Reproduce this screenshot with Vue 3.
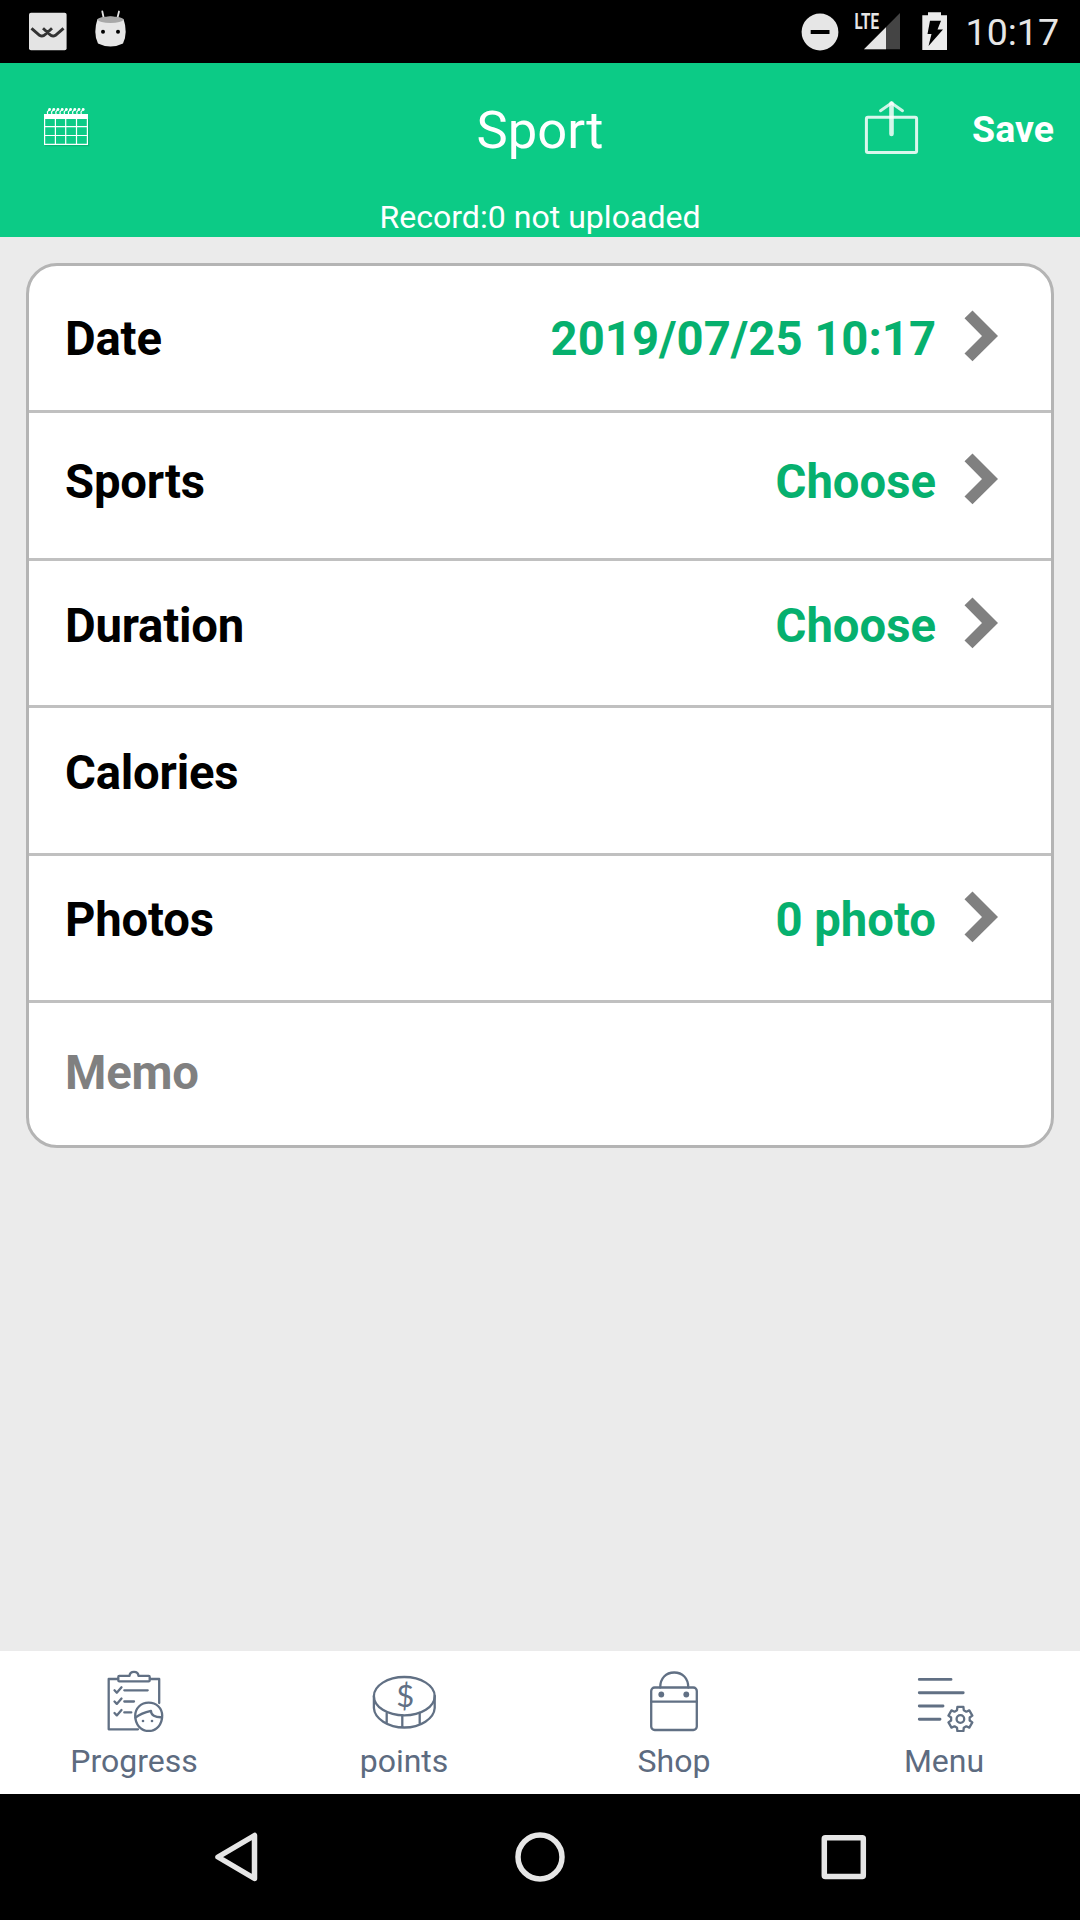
<script setup>
const rows = [
  { key: 'date', label: 'Date', value: '2019/07/25 10:17' },
  { key: 'sports', label: 'Sports', value: 'Choose' },
  { key: 'duration', label: 'Duration', value: 'Choose' },
  { key: 'calories', label: 'Calories', value: '' },
  { key: 'photos', label: 'Photos', value: '0 photo' },
  { key: 'memo', label: 'Memo', value: '' },
]

// six-toothed gear outline around (cx, cy)
function gear(cx, cy, outer, root) {
  const pts = []
  for (let i = 0; i < 6; i++) {
    const a = -90 + i * 60
    for (const [d, r] of [[-21, root], [-14, outer], [14, outer], [21, root]]) {
      const t = ((a + d) * Math.PI) / 180
      pts.push(`${(cx + r * Math.cos(t)).toFixed(2)} ${(cy + r * Math.sin(t)).toFixed(2)}`)
    }
  }
  return `M${pts.join('L')}Z`
}
const gearPath = gear(960.4, 1719, 12.4, 9.4)
const rings = Array.from({ length: 9 }, (_, i) => 49.6 + i * 4.2)
</script>

<template>
  <div class="screen">
    <div class="status">
      <svg class="st-left" width="140" height="63" viewBox="0 0 140 63">
        <rect x="29" y="12.7" width="37.6" height="37.6" rx="2" fill="#e4e4e4" />
        <path d="M31.500 28.300L39.500 35.300Q42.500 37.300 45.500 34.300L52 28.300M43 28.300L49.500 34.300Q52.500 37.300 55.500 35.300L63.500 28.300" fill="none" stroke="#333" stroke-width="2.900" />
        <path d="M102.300 11.500L103.800 18.500M119 11.500L117.300 18.500" stroke="#e4e4e4" stroke-width="1.800" stroke-linecap="round" />
        <path d="M97.500 19Q110.500 14 123.500 19Q125.700 25 125.700 32Q125.500 39 123 43.500Q117 46.500 110.500 46.500Q104 46.500 98 43.500Q95.500 39 95.300 32Q95.300 25 97.500 19Z" fill="#e6e6e6" />
        <ellipse cx="110.500" cy="19.700" rx="12.500" ry="3.300" fill="#a8a8a8" />
        <circle cx="103" cy="31.700" r="2" /><circle cx="118" cy="31.700" r="2" />
      </svg>
      <svg class="st-right" width="160" height="63" viewBox="795 0 160 63">
        <circle cx="820" cy="32" r="18.400" fill="#e6e6e6" />
        <rect x="810.700" y="30" width="18.800" height="4" />
        <path d="M900 13V49.300H864Z" fill="#444" />
        <path d="M886 27.200V49.300H864Z" fill="#e6e6e6" />
        <text class="lte" transform="translate(854.500 29) scale(.72 1)" textLength="34" lengthAdjust="spacingAndGlyphs">LTE</text>
        <path d="M922.300 15.300H928V12.300H941V15.300H947V50H922.300Z" fill="#ebebeb" />
        <path d="M930 20.800H941L937.500 29.500H943L928.500 46L931.500 34H927.500Z" />
      </svg>
      <span class="clock">10:17</span>
    </div>

    <header class="header">
      <div class="bar">
        <svg class="cal" width="50" height="44" viewBox="42 105 50 44">
          <g fill="none" stroke="#089a61" stroke-opacity=".45" stroke-width="1.200"><path d="M45 145.700H88.700V119" /></g>
          <g fill="none" stroke="#fff" stroke-width="1.200">
            <path v-for="x in rings" :key="x" :d="`M${x - 2} 114l-.2-2l2-2.500`" />
            <path d="M44.600 117V144.400H87.400V117M55.400 118V144M65.700 118V144M76.500 118V144M44.600 126.700H87.400M44.600 135.500H87.400" />
          </g>
          <circle v-for="x in rings" :key="'d' + x" :cx="x" cy="109.500" r="1.400" fill="#fff" />
          <rect x="44" y="114" width="44" height="5" fill="#fff" />
        </svg>
        <h1 class="title">Sport</h1>
        <div class="actions">
          <svg width="60" height="60" viewBox="862 98 60 60" fill="none" stroke="#fff">
            <rect x="866.400" y="117.200" width="50.200" height="35.400" rx="1.500" stroke-width="3" stroke-opacity=".85" />
            <path d="M891.500 134V103.500" stroke-width="4.600" stroke-linecap="round" stroke-opacity=".82" />
            <path d="M880.500 110.700L891.500 103L902.500 110.700" stroke-width="3" stroke-linecap="round" stroke-opacity=".8" />
          </svg>
          <span class="save">Save</span>
        </div>
      </div>
      <div class="record">Record:0 not uploaded</div>
    </header>

    <main class="body">
      <div class="card">
        <div v-for="r in rows" :key="r.key" class="row" :class="r.key">
          <span class="label">{{ r.label }}</span>
          <template v-if="r.value">
            <span class="value">{{ r.value }}</span>
            <svg class="chev" width="34" height="52" viewBox="0 0 34 52"><path d="M8.500 .5L34 26L8.500 51.300L.5 43.600L18 26L.5 8.300Z" fill="#808080" /></svg>
          </template>
        </div>
      </div>
    </main>

    <nav class="tabs">
      <div class="tab">
        <svg width="80" height="72" viewBox="95 1660 80 72" class="line">
          <path d="M118 1679H108.700V1729.300H138M150 1679H159.200V1703" />
          <path d="M119.300 1675.900H129.500C130 1670.500 138 1670.500 138.500 1675.900H148.700Q149.700 1675.900 149.700 1677V1680.300Q149.700 1681.400 148.700 1681.400H119.300Q118.300 1681.400 118.300 1680.300V1677Q118.300 1675.900 119.300 1675.900Z" />
          <path d="M114.500 1690.300L116.800 1692.700L121.500 1687.300M114.500 1701.500L116.800 1703.900L121.500 1698.500M114.500 1713L116.800 1715.400L121.500 1710M124.300 1690.300H147.700M124.300 1701.500H134M124.300 1712.400H131.300" />
          <path d="M135.200 1715.500C135.500 1708 141 1702.700 148.700 1702.700S162 1708 162.200 1715.500C162.200 1724 157 1731 148.700 1731S135.200 1724 135.200 1715.500Z" fill="#fff" />
          <path d="M135.500 1717.500C140 1714 146 1712 151 1710.900C151 1715 155 1717.500 162 1717.200" />
          <g fill="#617084" stroke="none"><circle cx="143" cy="1721" r="1.300" /><circle cx="152" cy="1721" r="1.300" /></g>
        </svg>
        <span>Progress</span>
      </div>
      <div class="tab">
        <svg width="80" height="72" viewBox="365 1660 80 72" class="line">
          <ellipse cx="404.300" cy="1696.200" rx="30.400" ry="19.200" />
          <path d="M373.900 1696V1708C374.500 1718.500 388 1727.500 404.300 1727.500S434.100 1718.500 434.700 1708V1696M386.700 1713.500V1723.500M402.300 1715.500V1727.500M419.700 1713V1724" />
          <text class="dollar" x="405.300" y="1706.800" text-anchor="middle">$</text>
        </svg>
        <span>points</span>
      </div>
      <div class="tab">
        <svg width="80" height="72" viewBox="635 1660 80 72" class="line">
          <rect x="651.200" y="1687.500" width="45.600" height="42.500" rx="3.500" />
          <path d="M651.200 1701.700H696.800M660.200 1687.500C660.200 1678 666 1672.500 674.200 1672.500S688.300 1678 688.300 1687.500" />
          <g fill="#617084" stroke="none"><circle cx="661.300" cy="1694.500" r="2.900" /><circle cx="686.300" cy="1694.500" r="2.900" /></g>
        </svg>
        <span>Shop</span>
      </div>
      <div class="tab">
        <svg width="80" height="72" viewBox="905 1660 80 72" class="line">
          <path d="M919.300 1679.400H951M919.300 1692.700H963.200M919.300 1706H943M919.300 1719.200H940" stroke-width="2.900" />
          <path :d="gearPath" /><circle cx="960.400" cy="1719" r="3.800" />
        </svg>
        <span>Menu</span>
      </div>
    </nav>

    <div class="sysnav">
      <svg width="60" height="60" viewBox="210 1827 60 60"><path d="M254.500 1835.500V1878.500L218 1857Z" /></svg>
      <svg width="60" height="60" viewBox="510 1827 60 60"><circle cx="540" cy="1857" r="22" /></svg>
      <svg width="60" height="60" viewBox="810 1827 60 60"><rect x="824.300" y="1837.800" width="39" height="38.600" rx="1" /></svg>
    </div>
  </div>
</template>

<style>
body { margin: 0; }
</style>

<style scoped>
.screen {
  width: 1080px;
  height: 1920px;
  display: flex;
  flex-direction: column;
  overflow: hidden;
  background: #ebebeb;
  font-family: Roboto, "Liberation Sans", sans-serif;
}
svg { display: block; flex: none; }
.status {
  height: 63px;
  background: #000;
  display: flex;
  justify-content: flex-end;
}
.st-left { margin-right: auto; }
.lte { font: 700 22px Roboto, sans-serif; fill: #e6e6e6; }
.clock {
  width: 104px;
  margin-right: 21px;
  font-size: 37.500px;
  line-height: 43px;
  padding-top: 11px;
  color: #e6e6e6;
  text-align: right;
  white-space: nowrap;
}
.header {
  height: 174px;
  background: #0ccb86;
  color: #fff;
}
.bar {
  height: 135px;
  display: grid;
  grid-template-columns: 1fr auto 1fr;
  align-items: start;
}
.cal { margin: 42px 0 0 42px; }
.title {
  margin: 36px 0 0;
  font-size: 52.500px;
  line-height: 62px;
  font-weight: 400;
}
.actions {
  display: flex;
  justify-content: flex-end;
  padding: 35px 26px 0 0;
}
.save {
  width: 82px;
  margin: 10px 0 0 50px;
  font-size: 37.500px;
  line-height: 43px;
  font-weight: 700;
  text-align: right;
}
.record {
  padding-top: 1px;
  font-size: 32.100px;
  line-height: 37px;
  text-align: center;
}
.body { flex: 1; padding: 26px 26px 0; }
.card {
  height: 885px;
  box-sizing: border-box;
  border: 3px solid #b4b4b4;
  border-radius: 31px;
  background: #fff;
  overflow: hidden;
}
.row {
  box-sizing: border-box;
  height: 147.400px;
  display: flex;
  align-items: flex-start;
  padding: 37px 53px 0 36px;
  border-bottom: 3px solid #c0c0c0;
  font-size: 47.250px;
  line-height: 56px;
  font-weight: 700;
}
.date { padding-top: 45px; }
.sports { padding-top: 41px; }
.photos { padding-top: 36px; }
.memo { padding-top: 42px; border-bottom: 0; color: #808080; }
.label { letter-spacing: -.2px; }
.value { margin-left: auto; color: #06b06e; }
.chev { margin: -1px 0 0 28px; }
.tabs {
  height: 143px;
  background: #fff;
  display: flex;
}
.tab {
  width: 270px;
  display: flex;
  flex-direction: column;
  align-items: center;
  padding-top: 9px;
  font-size: 32px;
  line-height: 37px;
  color: #5d6b80;
}
.tab span { margin: 11px 2px 0 0; }
.line {
  fill: none;
  stroke: #617084;
  stroke-width: 2.300;
  stroke-linecap: round;
  stroke-linejoin: round;
}
.dollar { font: 400 31px Lato, "Liberation Sans", sans-serif; fill: #617084; stroke: none; }
.sysnav {
  height: 126px;
  background: #000;
  display: flex;
  justify-content: space-between;
  align-items: center;
  padding: 0 210px;
}
.sysnav svg { fill: none; stroke: #e6e6e6; stroke-width: 5.500; stroke-linejoin: round; }
</style>
